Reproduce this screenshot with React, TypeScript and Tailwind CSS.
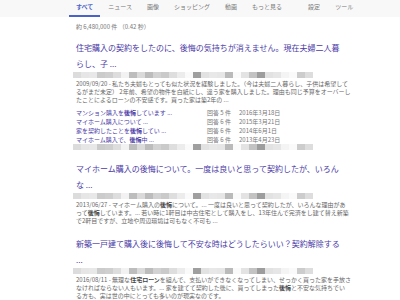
const tabs = ['ニュース', '画像', 'ショッピング', '動画', 'もっと見る'];

// pixelated (blurred) url strip under each result title
const shades = [
  '#dcdcdc', '#e6e6e6', '#e8e8e8', '#cbcbcb', '#cfcfcf', '#dddddd', '#f2f2f2', '#bdbdbd',
  '#dadada', '#bcbcbc', '#d2d2d2', '#cacaca', '#dedede', '#ececec', '#fafafa', '#9f9f9f',
  '#e2e2e2', '#e8e8e8', '#e6e6e6', '#bababa', '#fafafa', '#e3e3e3', '#c3c3c3', '#9d9d9d',
  '#e2e2e2', '#e6e6e6', '#f4f4f4', '#fafafa', '#cccccc', '#dddddd',
];

function Blur() {
  return (
    <div className="-ml-[3px] flex h-[6px]">
      {shades.map((c, i) => (
        <div key={i} className="h-full w-[8px]" style={{ backgroundColor: c }} />
      ))}
    </div>
  );
}

function Title({ lines }: { lines: string[] }) {
  return (
    <div className="text-[8px] leading-[15.5px] text-[#4b3aa6]">
      {lines.map((l) => (
        <div key={l} className="whitespace-nowrap">{l}</div>
      ))}
    </div>
  );
}

function Snippet({ lines }: { lines: React.ReactNode[] }) {
  return (
    <div className="mt-[2px] text-[6px] leading-[8px] text-[#666]">
      {lines.map((l, i) => (
        <div key={i} className="whitespace-nowrap">{l}</div>
      ))}
    </div>
  );
}

const B = ({ children }: { children: React.ReactNode }) => (
  <b className="font-bold text-[#444]">{children}</b>
);

const subs = [
  { pre: 'マンション購入を', em: '後悔', post: 'しています ...', n: 5, date: '2016年3月18日' },
  { pre: 'マイホーム購入について ...', em: '', post: '', n: 6, date: '2015年3月21日' },
  { pre: '家を契約したことを', em: '後悔', post: 'してい ...', n: 6, date: '2014年6月1日' },
  { pre: 'マイホーム購入で、', em: '後悔', post: '中 ...', n: 6, date: '2013年4月23日' },
];

export default function App() {
  return (
    <div className="h-[300px] w-[400px] overflow-hidden bg-white font-['Noto_Sans_CJK_JP',sans-serif]">
      <div className="flex h-[17px] bg-[#f8f8f8] pl-[69px] text-[6px] leading-[8px] text-[#777]">
        <div className="h-[17px] border-b-2 border-[#4a62c8] px-[7px] pt-[3px] font-bold text-[#4a62c8]">すべて</div>
        {tabs.map((t) => (
          <div key={t} className="ml-px px-[7px] pt-[3px]">{t}</div>
        ))}
        <div className="ml-[12px] px-[7px] pt-[3px]">設定</div>
        <div className="ml-px px-[7px] pt-[3px]">ツール</div>
      </div>

      <div className="pl-[76px]">
        <div className="mt-[6px] text-[6px] leading-[8px] text-[#777]">約 6,480,000 件 （0.42 秒）</div>

        <div className="mt-[9px]">
          <Title lines={['住宅購入の契約をしたのに、後悔の気持ちが消えません。現在夫婦二人暮', 'らし、子 ...']} />
          <div className="mt-[1px]"><Blur /></div>
          <Snippet
            lines={[
              '2009/09/20 - 私たち夫婦もとっても似た状況を経験しました。（今は夫婦二人暮らし、子供は希望して',
              'るがまだ未定） 2年前、希望の物件を白紙にし、違う家を購入しました。理由も同じ予算をオーバーし',
              'たことによるローンの不安感です。買った家は築2年の ...',
            ]}
          />
          <div className="mt-[4px] text-[6px] leading-[9px]">
            {subs.map((s) => (
              <div key={s.date} className="flex whitespace-nowrap">
                <div className="w-[131px] text-[#4b3aa6]">
                  {s.pre}
                  {s.em && <b className="font-bold">{s.em}</b>}
                  {s.post}
                </div>
                <div className="w-[32px] text-[#777]">回答 {s.n} 件</div>
                <div className="text-[#777]">{s.date}</div>
              </div>
            ))}
          </div>
          <Blur />
        </div>

        <div className="mt-[11px]">
          <Title lines={['マイホーム購入の後悔について。一度は良いと思って契約したが、いろん', 'な ...']} />
          <div className="mt-[1px]"><Blur /></div>
          <Snippet
            lines={[
              <>2013/06/27 - マイホーム購入の<B>後悔</B>について。... 一度は良いと思って契約したが、いろんな理由があ</>,
              <>って<B>後悔</B>しています。... 若い時に1軒目は中古住宅として購入をし、13年住んで完済をし建て替え新築</>,
              'で2軒目ですが、立地や周辺環境は可もなく不可も ...',
            ]}
          />
        </div>

        <div className="mt-[11px]">
          <Title lines={['新築一戸建て購入後に後悔して不安な時はどうしたらいい？契約解除する', '...']} />
          <div className="mt-[1px]"><Blur /></div>
          <Snippet
            lines={[
              <>2016/08/11 - 無理な<B>住宅ローン</B>を組んで、支払いができなくなってしまい、せっかく買った家を手放さ</>,
              <>なければならない人もいます。... 家を建てて契約した後に、買ってしまった<B>後悔</B>と不安な気持ちでい</>,
              'る方も、実は世の中にとっても多いのが現実なのです。',
            ]}
          />
        </div>
      </div>
    </div>
  );
}
